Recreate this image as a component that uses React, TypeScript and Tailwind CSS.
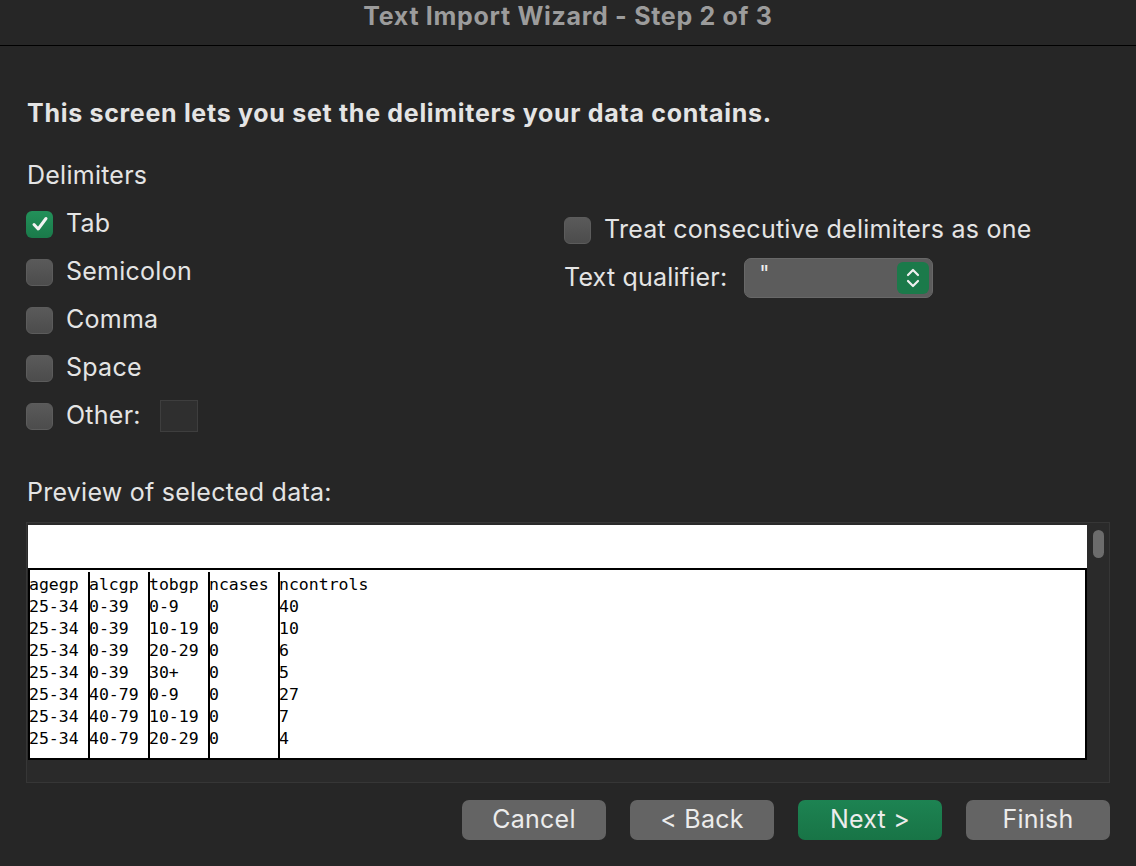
import React from "react";

const rows = [
  ["agegp", "alcgp", "tobgp", "ncases", "ncontrols"],
  ["25-34", "0-39", "0-9", "0", "40"],
  ["25-34", "0-39", "10-19", "0", "10"],
  ["25-34", "0-39", "20-29", "0", "6"],
  ["25-34", "0-39", "30+", "0", "5"],
  ["25-34", "40-79", "0-9", "0", "27"],
  ["25-34", "40-79", "10-19", "0", "7"],
  ["25-34", "40-79", "20-29", "0", "4"],
];

const colWidths = ["w-[60px]", "w-[60px]", "w-[60px]", "w-[70px]", "flex-1"];

function Check({ checked }: { checked?: boolean }) {
  if (checked) {
    return (
      <div className="w-[27px] h-[27px] rounded-[6px] bg-gradient-to-b from-[#23915a] to-[#1a7a4a] flex items-center justify-center shrink-0">
        <svg width="20" height="20" viewBox="0 0 20 20" fill="none">
          <path d="M4 10.5 L8.2 15 L16 4.5" stroke="#f2f2f2" strokeWidth="3" strokeLinecap="round" strokeLinejoin="round" />
        </svg>
      </div>
    );
  }
  return (
    <div className="w-[27px] h-[27px] rounded-[6px] bg-gradient-to-b from-[#5a5a5a] to-[#4c4c4c] border border-[#5c5c5c] shrink-0" />
  );
}

function Row({ label, checked, extra }: { label: string; checked?: boolean; extra?: React.ReactNode }) {
  return (
    <div className="h-[48px] flex items-center">
      <Check checked={checked} />
      <span className="ml-[13px] text-[25px] tracking-[0.25px] text-[#e4e4e4]">{label}</span>
      {extra}
    </div>
  );
}

function Button({ label, primary }: { label: string; primary?: boolean }) {
  return (
    <div
      className={
        "w-[144px] h-[40px] rounded-[7px] flex items-center justify-center text-[25px] tracking-[0.25px] text-[#ececec] " +
        (primary ? "bg-gradient-to-b from-[#1d8352] to-[#187446]" : "bg-[#646464]")
      }
    >
      {label}
    </div>
  );
}

export default function App() {
  return (
    <div
      className="w-[1136px] h-[866px] bg-[#262626] overflow-hidden"
      style={{ fontFamily: "Inter, 'Noto Sans', sans-serif" }}
    >
      <div className="h-[46px] border-b border-black flex items-center justify-center">
        <span className="text-[25px] font-bold text-[#9c9c9c] -mt-[12px] tracking-[0.7px]">
          Text Import Wizard - Step 2 of 3
        </span>
      </div>

      <div className="px-[27px]">
        <div className="mt-[51px] h-[32px] leading-[32px] text-[25px] font-bold text-[#e4e4e4] tracking-[0.7px]">
          This screen lets you set the delimiters your data contains.
        </div>
        <div className="mt-[30px] h-[32px] leading-[32px] text-[25px] tracking-[0.25px] text-[#e4e4e4]">Delimiters</div>

        <div className="mt-[9px] flex">
          <div className="w-[538px] -ml-[1px]">
            <Row label="Tab" checked />
            <Row label="Semicolon" />
            <Row label="Comma" />
            <Row label="Space" />
            <Row
              label="Other:"
              extra={<div className="ml-[19px] w-[38px] h-[32px] bg-[#2f2f2f] border border-[#3e3e3e]" />}
            />
          </div>
          <div className="pt-[6px]">
            <Row label="Treat consecutive delimiters as one" />
            <div className="h-[48px] flex items-center">
              <span className="text-[25px] tracking-[0.2px] text-[#e4e4e4]">Text qualifier:</span>
              <div className="ml-[17px] w-[189px] h-[40px] rounded-[7px] bg-[#5c5c5c] border border-[#686868] flex items-center justify-between pl-[14px] pr-[3px]">
                <span className="text-[22px] text-[#eeeeee] -mt-[10px]">"</span>
                <div className="w-[32px] h-[32px] rounded-[6px] bg-[#1b7a4a] flex items-center justify-center">
                  <svg width="18" height="22" viewBox="0 0 18 22" fill="none">
                    <path d="M4 8 L9 3 L14 8" stroke="#f0f0f0" strokeWidth="2.2" strokeLinecap="round" strokeLinejoin="round" />
                    <path d="M4 14 L9 19 L14 14" stroke="#f0f0f0" strokeWidth="2.2" strokeLinecap="round" strokeLinejoin="round" />
                  </svg>
                </div>
              </div>
            </div>
          </div>
        </div>

        <div className="mt-[36px] h-[32px] leading-[32px] text-[25px] tracking-[0.25px] text-[#e4e4e4]">Preview of selected data:</div>

        <div className="mt-[14px] -ml-[1px] w-[1084px] h-[261px] border border-[#363636] bg-[#2a2a2a] flex">
          <div className="w-[1059px] ml-[1px] mt-[2px] flex flex-col">
            <div className="h-[43px] bg-white" />
            <div
              className="h-[192px] bg-white border-2 border-black flex text-black text-[16.5px] leading-[22px] pt-[2px]"
              style={{ fontFamily: "'DejaVu Sans Mono', 'Liberation Mono', monospace" }}
            >
              {colWidths.map((w, ci) => (
                <div key={ci} className={w + " h-full pt-[2px] " + (ci < 4 ? "border-r-2 border-black" : "")}>
                  {rows.map((r, ri) => (
                    <div key={ri} className="h-[22px] whitespace-pre -ml-[1px]">
                      {r[ci]}
                    </div>
                  ))}
                </div>
              ))}
            </div>
          </div>
          <div className="flex-1 flex justify-center pt-[7px]">
            <div className="w-[11px] h-[28px] rounded-full bg-[#6c6c6c]" />
          </div>
        </div>

        <div className="mt-[17px] flex justify-end gap-[24px] pr-0 -mr-[1px]">
          <Button label="Cancel" />
          <Button label="< Back" />
          <Button label="Next >" primary />
          <Button label="Finish" />
        </div>
      </div>
    </div>
  );
}
